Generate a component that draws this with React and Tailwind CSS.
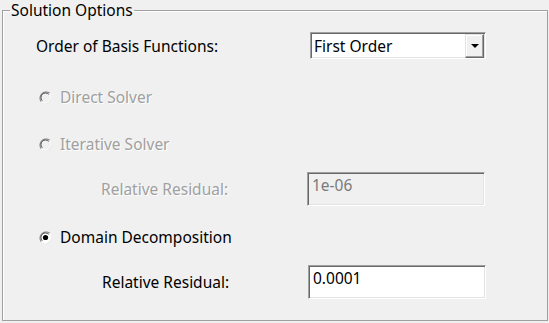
import React from "react";

const font = { fontFamily: '"Noto Sans", "Open Sans", sans-serif' };

function Radio({ checked, disabled }) {
  return (
    <svg width="13" height="13" viewBox="0 0 13 13" className="shrink-0">
      <circle cx="6.5" cy="6.5" r="6" fill={disabled ? "#f0f0f0" : "#ffffff"} stroke="#e3e3e3" strokeWidth="1" />
      <path d="M2.3 10.7 A6 6 0 0 1 10.7 2.3" fill="none" stroke="#8a8a8a" strokeWidth="1.3" />
      <path d="M3.3 9.7 A4.5 4.5 0 0 1 9.7 3.3" fill="none" stroke="#505050" strokeWidth="1" />
      <path d="M10.7 2.3 A6 6 0 0 1 2.3 10.7" fill="none" stroke="#ffffff" strokeWidth="1" />
      {checked && <circle cx="6.5" cy="6.5" r="2.6" fill="#000" />}
    </svg>
  );
}

function TextBox({ value, disabled }) {
  return (
    <div
      className={`w-[178px] h-[34px] border border-t-[#a0a0a0] border-l-[#a0a0a0] border-b-white border-r-white shadow-[inset_1px_1px_0_#696969,inset_-1px_-1px_0_#e3e3e3] pl-[4px] pt-[2px] text-[15.5px] leading-[20px] ${
        disabled ? "bg-[#f0f0f0] text-[#7a7a7a]" : "bg-white text-black"
      }`}
    >
      {value}
    </div>
  );
}

export default function App() {
  return (
    <div className="w-[549px] h-[323px] bg-[#f0f0f0] overflow-hidden" style={font}>
      <fieldset className="ml-[2px] w-[546px] h-[321px] border border-[#a0a0a0] shadow-[inset_1px_1px_0_#ffffff]">
        <legend className="ml-[7px] px-[1px] text-[15.5px] leading-[20px] text-black">
          Solution Options
        </legend>
        <div className="flex flex-col text-[15.5px] leading-[20px]">
          <div className="flex items-center h-[27px] mt-[12px]">
            <span className="ml-[33px] w-[274px] text-black">Order of Basis Functions:</span>
            <div className="flex items-center w-[176px] h-[27px] bg-white border border-t-[#a0a0a0] border-l-[#a0a0a0] border-b-white border-r-white shadow-[inset_1px_1px_0_#696969,inset_-1px_-1px_0_#e3e3e3]">
              <span className="ml-[3px] flex-1 text-black">First Order</span>
              <div className="flex items-center justify-center w-[19px] h-[24px] mr-[1px] bg-[#f0f0f0] border border-t-[#e3e3e3] border-l-[#e3e3e3] border-b-[#696969] border-r-[#696969] shadow-[inset_-1px_-1px_0_#a0a0a0,inset_1px_1px_0_#ffffff]">
                <svg width="8" height="4" viewBox="0 0 8 4">
                  <polygon points="0,0 8,0 4,4" fill="#000" />
                </svg>
              </div>
            </div>
          </div>
          <div className="flex items-center gap-[8px] h-[24px] mt-[26px] ml-[36px] text-[#a0a0a0] [text-shadow:1px_1px_0_#ffffff]">
            <Radio disabled />
            <span>Direct Solver</span>
          </div>
          <div className="flex items-center gap-[8px] h-[24px] mt-[23px] ml-[36px] text-[#a0a0a0] [text-shadow:1px_1px_0_#ffffff]">
            <Radio disabled />
            <span>Iterative Solver</span>
          </div>
          <div className="flex items-center h-[34px] mt-[16px]">
            <span className="ml-[98px] w-[206px] text-[#a0a0a0] [text-shadow:1px_1px_0_#ffffff]">Relative Residual:</span>
            <TextBox value="1e-06" disabled />
          </div>
          <div className="flex items-center gap-[8px] h-[24px] mt-[19px] ml-[36px] text-black">
            <Radio checked />
            <span>Domain Decomposition</span>
          </div>
          <div className="flex items-center h-[34px] mt-[16px]">
            <span className="ml-[99px] w-[206px] text-black">Relative Residual:</span>
            <TextBox value="0.0001" />
          </div>
        </div>
      </fieldset>
    </div>
  );
}
